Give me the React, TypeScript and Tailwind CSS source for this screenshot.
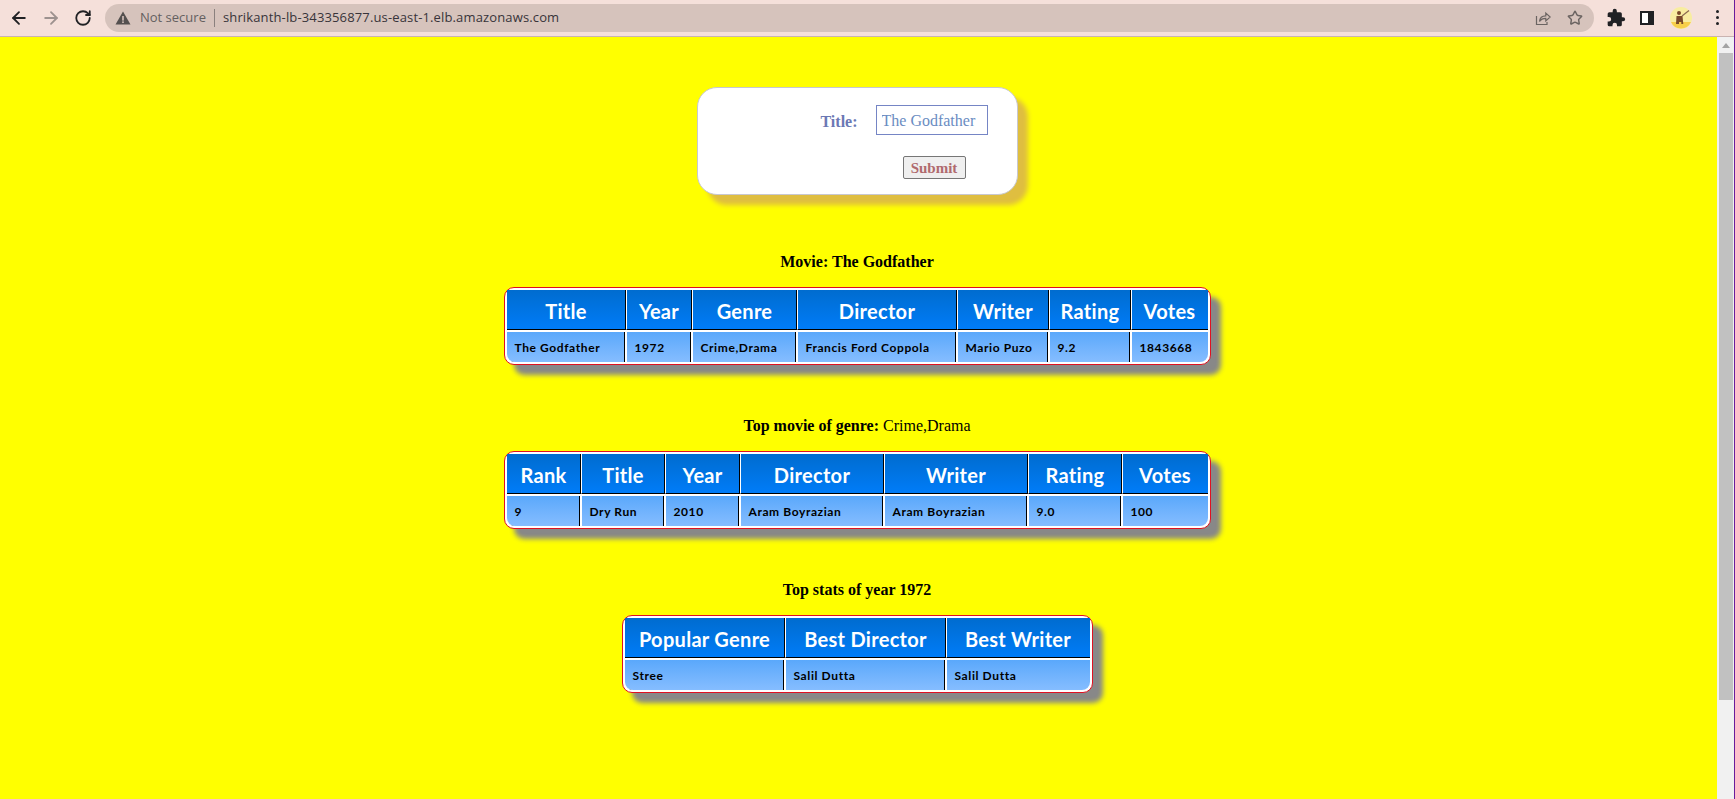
import { ArrowLeft, ArrowRight, RotateCw, Star } from "lucide-react";

const movieCols = [120, 66, 105, 160, 92, 82, 76];
const genreCols = [75, 84, 75, 144, 144, 94, 85];
const statCols = [161, 161, 143];

function DataTable({ cols, heads, row }: { cols: number[]; heads: string[]; row: string[] }) {
  const lastCol = heads.length - 1;
  return (
    <div className="rounded-[10px] border border-[#e01020] bg-white p-[2px] shadow-[10px_10px_5px_#888]">
      <table className="table-fixed border-separate border-spacing-0 font-['Comic_Sans_MS','Lato',sans-serif]">
        <colgroup>
          {cols.map((w, i) => (
            <col key={i} style={{ width: w }} />
          ))}
        </colgroup>
        <thead>
          <tr>
            {heads.map((h, i) => (
              <th
                key={h}
                className={`h-10 border-b border-b-black bg-gradient-to-b from-[#006ccf] to-[#007cf8] pt-[3px] text-center text-[20px] font-bold tracking-[0.3px] text-white ${
                  i === lastCol ? "" : "border-r border-r-white shadow-[inset_-1px_0_0_#000]"
                }`}
              >
                {h}
              </th>
            ))}
          </tr>
        </thead>
        <tbody>
          <tr>
            {row.map((c, i) => (
              <td
                key={i}
                className={`h-[32px] border-t-2 border-t-white bg-gradient-to-b from-[#5aa8fb] to-[#85bdff] pl-2 pt-[1px] text-[12px] font-bold tracking-[0.6px] text-black ${
                  i === lastCol
                    ? "rounded-br-[8px]"
                    : "border-r-2 border-r-white shadow-[inset_-1px_0_0_#000]"
                } ${i === 0 ? "rounded-bl-[8px]" : ""}`}
              >
                {c}
              </td>
            ))}
          </tr>
        </tbody>
      </table>
    </div>
  );
}

function BrowserBar() {
  return (
    <div className="flex h-[37px] items-center border-b border-[#c9b3b1] bg-[#f5e0da] pb-[1px] font-['Open_Sans',sans-serif]">
      <div className="flex w-[105px] items-center gap-[12px] pl-[9px] text-[#202124]">
        <ArrowLeft size={20} strokeWidth={2.2} />
        <ArrowRight size={20} strokeWidth={2.2} className="text-[#9d928f]" />
        <RotateCw size={18} strokeWidth={2.4} className="ml-[1px]" />
      </div>
      <div className="flex h-7 w-[1489px] items-center rounded-full bg-[#d6c3bc] pl-[10px] pr-[10px] text-[13px]">
        <svg width="16" height="16" viewBox="0 0 16 16" className="text-[#54504f]">
          <path d="M8 1.5 15.5 14.5H.5z" fill="currentColor" />
          <rect x="7.2" y="6" width="1.6" height="4.6" fill="#d6c3bc" />
          <rect x="7.2" y="11.4" width="1.6" height="1.6" fill="#d6c3bc" />
        </svg>
        <span className="ml-[9px] text-[#645f60]">Not secure</span>
        <span className="mx-[8px] h-[18px] w-px bg-[#8a807e]" />
        <span className="tracking-[0.14px] text-[#38343a]">shrikanth-lb-343356877.us-east-1.elb.amazonaws.com</span>
        <svg
          width="16"
          height="16"
          viewBox="0 0 16 16"
          fill="none"
          stroke="#6b6462"
          strokeWidth="1.2"
          className="ml-auto mr-[16px]"
        >
          <path d="M1.5 6v8.5h10.5V12" />
          <path d="M4.5 11.5c.3-3.6 3-5.6 6.3-5.6V3l4.4 4-4.4 4V8.3c-2.8 0-5 1-6.3 3.2z" />
        </svg>
        <Star size={16} strokeWidth={2.2} className="mr-[1px] text-[#6b6462]" />
      </div>
      <div className="flex flex-1 items-center gap-[10px] pl-[12px]">
        <svg width="20" height="20" viewBox="0 0 24 24" fill="#202124">
          <path d="M20.5 11H19V7a2 2 0 0 0-2-2h-4V3.5a2.5 2.5 0 0 0-5 0V5H4a2 2 0 0 0-2 2v3.8h1.5a2.7 2.7 0 0 1 0 5.4H2V20a2 2 0 0 0 2 2h3.8v-1.5a2.7 2.7 0 0 1 5.4 0V22H17a2 2 0 0 0 2-2v-4h1.5a2.5 2.5 0 0 0 0-5z" />
        </svg>
        <span className="ml-[4px] flex h-[14px] w-[14px] justify-end border-2 border-[#202124] bg-white">
          <span className="h-full w-[4px] bg-[#202124]" />
        </span>
        <svg width="22" height="22" viewBox="0 0 22 22" className="ml-[6px]">
          <circle cx="11" cy="11" r="11" fill="#f8eda0" />
          <path d="M1 15h20a11 11 0 0 1-20 0z" fill="#f7cf4a" />
          <circle cx="9" cy="6" r="2" fill="#7a4a2a" />
          <path d="M6.5 9h6l.8 8h-2v-2H9v2H6z" fill="#7a4a2a" />
          <path d="M12 9 19 3.5" stroke="#8a6a50" strokeWidth="1.2" />
        </svg>
        <span className="ml-[14px] flex flex-col gap-[3px]">
          <span className="h-[3px] w-[3px] rounded-full bg-[#202124]" />
          <span className="h-[3px] w-[3px] rounded-full bg-[#202124]" />
          <span className="h-[3px] w-[3px] rounded-full bg-[#202124]" />
        </span>
      </div>
    </div>
  );
}

export default function App() {
  return (
    <div className="flex h-[799px] w-full flex-col overflow-hidden border-r border-[#6a1b9a] font-['Liberation_Serif',serif] text-base text-black">
      <BrowserBar />
      <div className="flex min-h-0 flex-1">
        <main className="flex flex-1 flex-col items-center bg-[#ffff00] pr-[3px]">
          {/* Search form */}
          <form className="mt-[50px] h-[108px] w-[321px] rounded-[20px] border border-[#c8c8d0] bg-white pr-[29px] pt-[17px] shadow-[10px_10px_5px_#dfbe40]">
            <div className="flex items-center justify-end gap-[18px]">
              <label className="mt-[3px] font-bold text-[#6b78b4]">Title:</label>
              <input
                readOnly
                value="The Godfather"
                className="h-[30px] w-[112px] border border-[#7585c5] bg-white px-[5px] pt-[2px] text-base text-[#6a8cc2] outline-none"
              />
            </div>
            <div className="mt-[21px] flex justify-end pr-[22px]">
              <button
                type="button"
                className="h-[23px] w-[63px] rounded-[2px] border border-[#767676] bg-[#efefef] pb-[1px] text-[15px] font-bold text-[#b06a6e]"
              >
                Submit
              </button>
            </div>
          </form>

          <h3 className="mt-[58px] text-base font-bold leading-[18px]">Movie: The Godfather</h3>
          <div className="mt-[16px]">
            <DataTable
              cols={movieCols}
              heads={["Title", "Year", "Genre", "Director", "Writer", "Rating", "Votes"]}
              row={["The Godfather", "1972", "Crime,Drama", "Francis Ford Coppola", "Mario Puzo", "9.2", "1843668"]}
            />
          </div>

          <h3 className="mt-[52px] text-base leading-[18px]">
            <b>Top movie of genre:</b> Crime,Drama
          </h3>
          <div className="mt-[16px]">
            <DataTable
              cols={genreCols}
              heads={["Rank", "Title", "Year", "Director", "Writer", "Rating", "Votes"]}
              row={["9", "Dry Run", "2010", "Aram Boyrazian", "Aram Boyrazian", "9.0", "100"]}
            />
          </div>

          <h3 className="mt-[52px] text-base font-bold leading-[18px]">Top stats of year 1972</h3>
          <div className="mt-[16px]">
            <DataTable
              cols={statCols}
              heads={["Popular Genre", "Best Director", "Best Writer"]}
              row={["Stree", "Salil Dutta", "Salil Dutta"]}
            />
          </div>
        </main>

        {/* Scrollbar */}
        <div className="flex w-[17px] flex-col items-center bg-[#f1f1f1]">
          <div className="mt-[6px] h-0 w-0 border-x-[4px] border-b-[5px] border-x-transparent border-b-[#a3a3a3]" />
          <div className="mt-[5px] h-[647px] w-[14px] bg-[#c1c1c1]" />
        </div>
      </div>
    </div>
  );
}
